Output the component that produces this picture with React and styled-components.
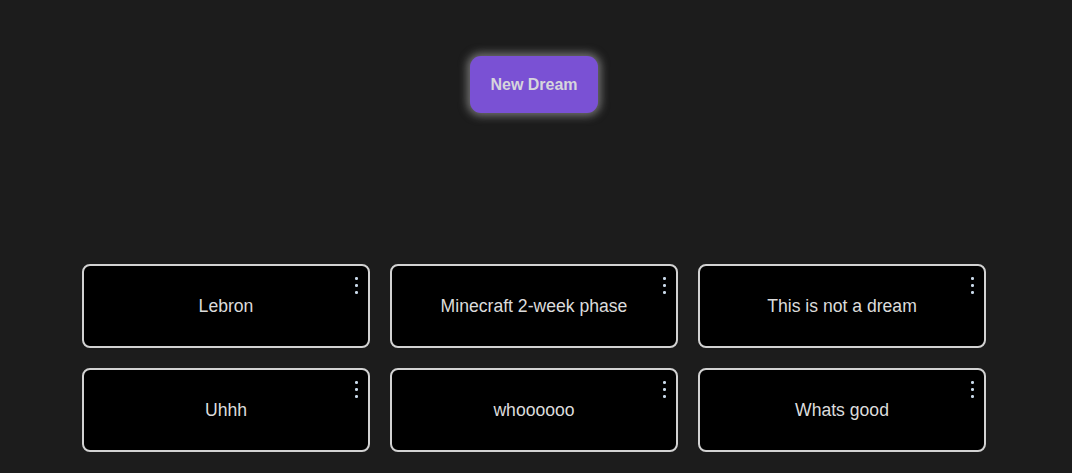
import React from 'react';
import styled, { createGlobalStyle } from 'styled-components';

const GlobalStyle = createGlobalStyle`
  html, body {
    margin: 0;
    padding: 0;
    background: #1c1c1c;
    font-family: "Liberation Sans", Arial, sans-serif;
  }
`;

const Page = styled.div`
  min-height: 473px;
  padding-right: 4px;
  display: flex;
  flex-direction: column;
  align-items: center;
`;

const NewButton = styled.button`
  margin-top: 56px;
  padding: 19px 20px;
  line-height: 19px;
  font-family: inherit;
  font-size: 16px;
  font-weight: bold;
  color: #d6d6dc;
  background: #7a51d4;
  border: none;
  border-radius: 11px;
  box-shadow: 0 0 9px 3px rgba(200, 200, 200, 0.5);
  cursor: pointer;
`;

const Grid = styled.div`
  margin-top: 151px;
  display: grid;
  grid-template-columns: repeat(3, 288px);
  gap: 20px;
`;

const Card = styled.div`
  position: relative;
  box-sizing: border-box;
  height: 84px;
  background: #000;
  border: 2px solid #d2d2d2;
  border-radius: 8px;
  display: flex;
  align-items: center;
  justify-content: center;
  color: #dcdcdc;
  font-size: 17.6px;
`;

const Menu = styled.span`
  position: absolute;
  top: 11px;
  right: 10px;
  width: 3px;
  display: flex;
  flex-direction: column;
  align-items: center;
  gap: 4.5px;
  i {
    width: 2.5px;
    height: 2.5px;
    border-radius: 50%;
    background: #c9d9e9;
  }
`;

const dreams = [
  'Lebron',
  'Minecraft 2-week phase',
  'This is not a dream',
  'Uhhh',
  'whoooooo',
  'Whats good'
];

const App = () => {
  return (
    <Page>
      <GlobalStyle />
      <NewButton>New Dream</NewButton>
      <Grid>
        {dreams.map((d) => (
          <Card key={d}>
            {d}
            <Menu>
              <i />
              <i />
              <i />
            </Menu>
          </Card>
        ))}
      </Grid>
    </Page>
  );
};

export default App;
